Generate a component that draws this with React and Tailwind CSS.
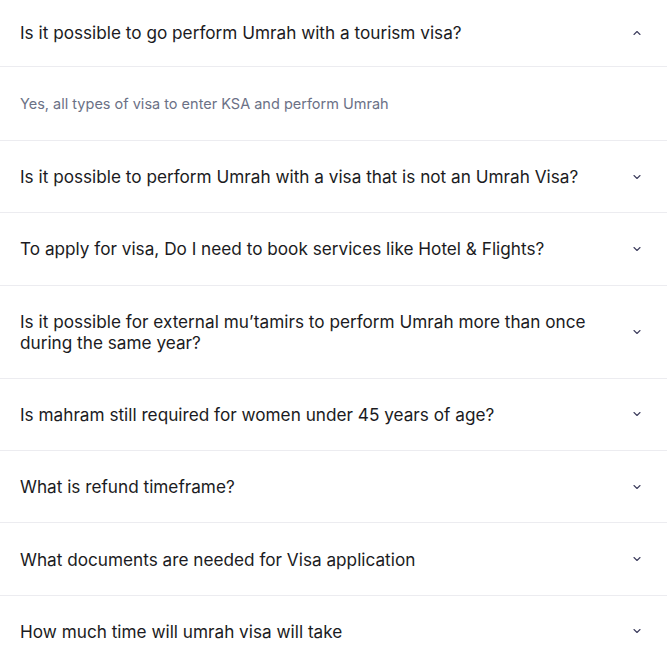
import { ChevronDown, ChevronUp } from "lucide-react";

const faqs = [
  {
    q: "Is it possible to go perform Umrah with a tourism visa?",
    a: "Yes, all types of visa to enter KSA and perform Umrah",
    open: true,
  },
  { q: "Is it possible to perform Umrah with a visa that is not an Umrah Visa?" },
  { q: "To apply for visa, Do I need to book services like Hotel & Flights?" },
  {
    q: "Is it possible for external mu’tamirs to perform Umrah more than once during the same year?",
  },
  { q: "Is mahram still required for women under 45 years of age?" },
  { q: "What is refund timeframe?" },
  { q: "What documents are needed for Visa application" },
  { q: "How much time will umrah visa will take" },
];

function FaqItem({ item, first }) {
  return (
    <div className="border-b border-[#ececf0]">
      <button
        className={`w-full flex items-center justify-between gap-6 px-5 text-left ${
          first ? "pt-[22px] pb-[23px]" : "py-[25.15px]"
        }`}
      >
        <span className="text-[17.2px] leading-[21px] text-[#1b1b22] max-w-[590px]">
          {item.q}
        </span>
        <span className="w-[16px] mr-[2px] shrink-0 flex justify-center text-[#3f3f5f]">
          {item.open ? (
            <ChevronUp size={12} strokeWidth={2.25} />
          ) : (
            <ChevronDown size={12} strokeWidth={2.25} />
          )}
        </span>
      </button>
      {item.open && (
        <div className="border-t border-[#ececf0] px-5 py-[27px] text-[14.5px] leading-[19px] text-[#6b7186]">
          {item.a}
        </div>
      )}
    </div>
  );
}

export default function App() {
  return (
    <div
      className="w-[667px] min-h-[661px] bg-white overflow-hidden"
      style={{ fontFamily: "Inter, 'Noto Sans', sans-serif" }}
    >
      {faqs.map((item, i) => (
        <FaqItem key={i} item={item} first={i === 0} />
      ))}
    </div>
  );
}
